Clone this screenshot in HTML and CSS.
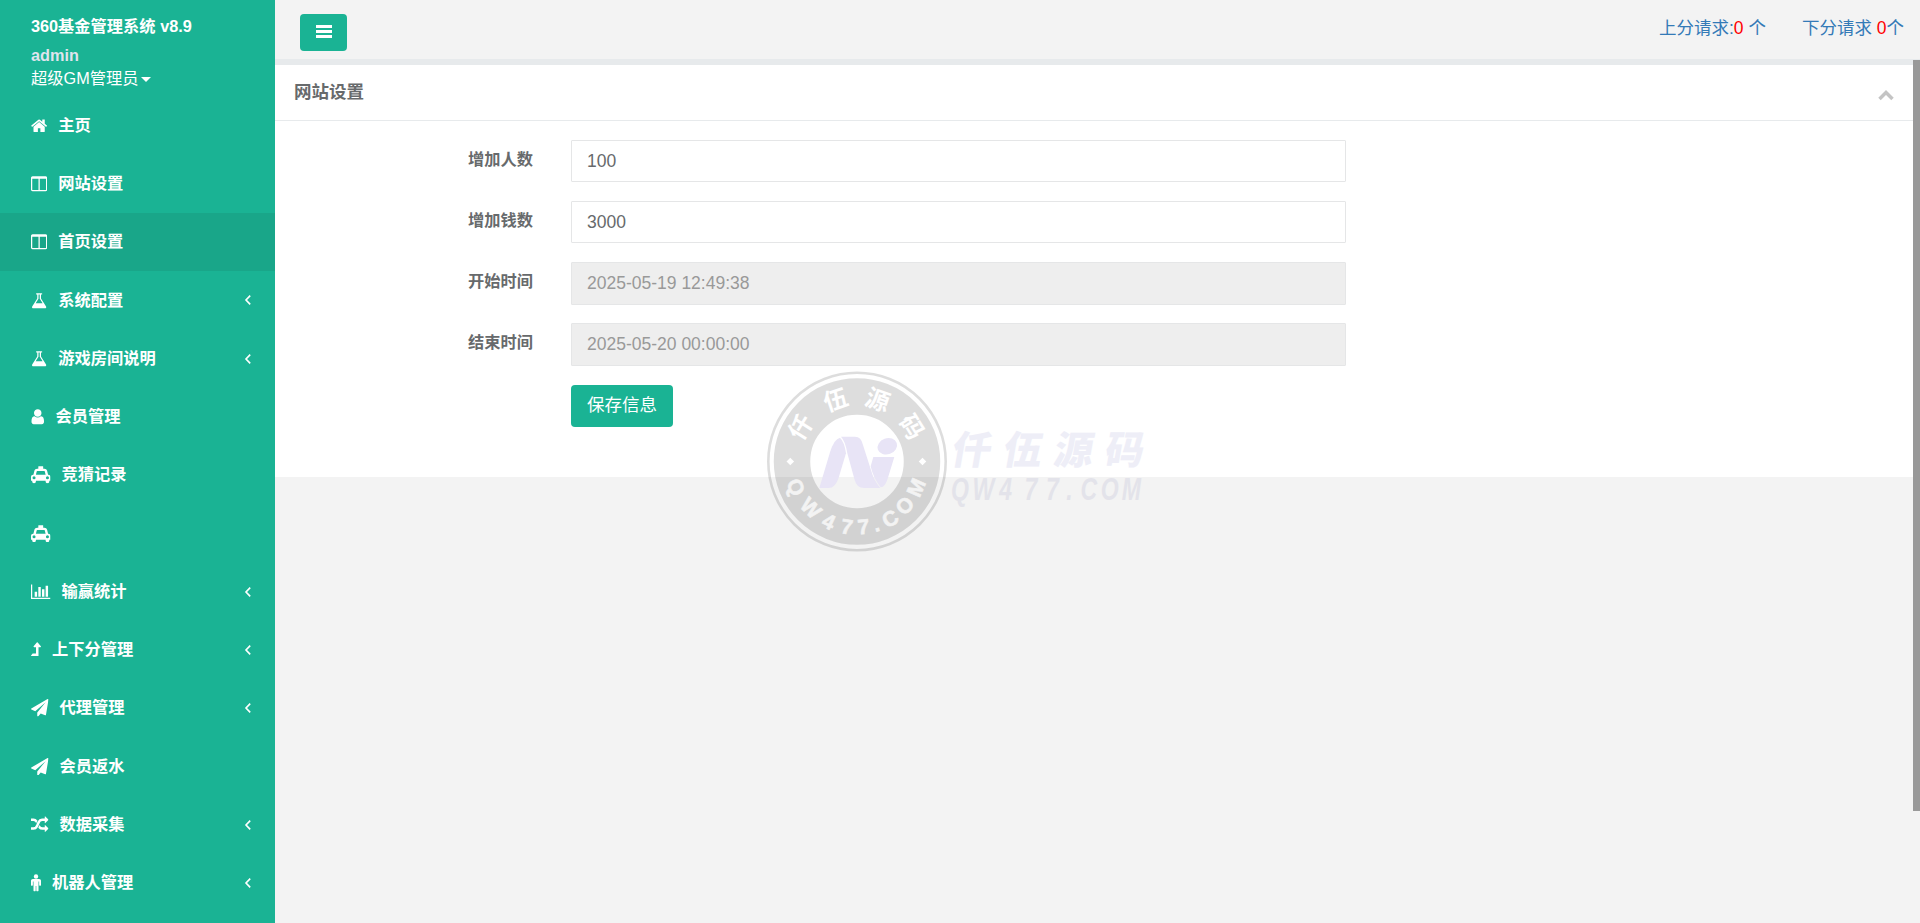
FILE: index.html
```html
<!DOCTYPE html>
<html lang="zh-CN">

<head>
    <meta charset="utf-8">
    <title>网站设置</title>
    <link rel="stylesheet" href="styles.css">
</head>

<body>
    <svg class="defs">
        <symbol id="home" viewBox="64 0 1664 1792"><path d="M1472 992v480q0 26-19 45t-45 19h-384v-384h-256v384h-384q-26 0-45-19t-19-45v-480q0-1 .5-3t.5-3l575-474 575 474q1 2 1 6zm223-69l-62 74q-8 9-21 11h-3q-13 0-21-7l-692-577-692 577q-12 8-24 7-13-2-21-11l-62-74q-8-10-7-23.5t11-21.5l719-599q32-26 76-26t76 26l244 204v-195q0-14 9-23t23-9h192q14 0 23 9t9 23v408l219 182q10 8 11 21.5t-7 23.5z"/></symbol>
        <symbol id="columns" viewBox="64 0 1664 1792"><path d="M224 1536h608v-1152h-640v1120q0 13 9.5 22.5t22.5 9.5zm1376-32v-1120h-640v1152h608q13 0 22.5-9.5t9.5-22.5zm128-1216v1216q0 66-47 113t-113 47h-1344q-66 0-113-47t-47-113v-1216q0-66 47-113t113-47h1344q66 0 113 47t47 113z"/></symbol>
        <symbol id="flask" viewBox="64 0 1664 1792"><path d="M1591 1448q56 89 21.5 152.5t-140.5 63.5h-1152q-106 0-140.5-63.5t21.5-152.5l503-793v-399h-64q-26 0-45-19t-19-45 19-45 45-19h512q26 0 45 19t19 45-19 45-45 19h-64v399zm-779-725l-272 429h712l-272-429-20-31v-436h-128v436z"/></symbol>
        <symbol id="user" viewBox="256 0 1280 1792"><path d="M1536 1399q0 109-62.5 187t-150.5 78h-854q-88 0-150.5-78t-62.5-187q0-85 8.5-160.5t31.5-152 58.5-131 94-89 134.5-34.5q131 128 313 128t313-128q76 0 134.5 34.5t94 89 58.5 131 31.5 152 8.5 160.5zm-256-887q0 159-112.5 271.5t-271.5 112.5-271.5-112.5-112.5-271.5 112.5-271.5 271.5-112.5 271.5 112.5 112.5 271.5z"/></symbol>
        <symbol id="taxi" viewBox="0 0 2048 1792"><path fill-rule="evenodd" d="M1824 896q93 0 158.500 65.500t65.500 158.500v384q0 32-32 32h-96v64q0 80-56 136t-136 56-136-56-56-136v-64h-1024v64q0 80-56 136t-136 56-136-56-56-136v-64h-96q-32 0-32-32v-384q0-93 65.500-158.500t158.500-65.500h28l105-419q23-94 104-157.500t179-63.500h128v-224q0-32 32-32h448q32 0 32 32v224h128q98 0 179 63.500t104 157.500l105 419zM320 1376a160 160 0 1 0 0-320a160 160 0 1 0 0 320zM516 896h1016l-89-357q-2-8-14-17.500t-21-9.500h-768q-9 0-21 9.500t-14 17.500zM1728 1376a160 160 0 1 0 0-320a160 160 0 1 0 0 320z"/></symbol>
        <symbol id="chart" viewBox="0 0 2048 1792"><path d="M640 896v512h-256v-512h256zm384-512v1024h-256v-1024h256zm1024 1152v128h-2048v-1536h128v1408h1920zm-640-896v768h-256v-768h256zm384-384v1152h-256v-1152h256z"/></symbol>
        <symbol id="level" viewBox="0 0 1024 1792"><path d="M1018 595q-17 37-58 37h-192v872q0 32-32 32H32q-20 0-29-18-8-19 5-35l160-192q9-11 24-11h320V632H320q-41 0-58-37-17-36 9-68l320-384q19-22 49-22t49 22l320 384q27 32 9 68z"/></symbol>
        <symbol id="plane" viewBox="0 0 1792 1792"><path d="M1764 11q33 24 27 64l-256 1536q-5 29-32 45-14 8-31 8-11 0-24-5l-453-185-242 295q-18 23-49 23-13 0-22-4-19-7-30.500-23.500t-11.500-36.500v-349l864-1059-1069 925-395-162q-37-14-40-55-2-40 32-59l1664-960q15-9 32-9 20 0 36 11z"/></symbol>
        <symbol id="random" viewBox="0 0 1792 1792"><path d="M666 481q-60 92-137 273-22-45-37-72.500t-40.500-63.500-51-56.500-63-35-81.500-14.500h-224q-14 0-23-9t-9-23v-192q0-14 9-23t23-9h224q250 0 410 225zm1126 799q0 14-9 23l-320 320q-9 9-23 9-13 0-22.500-9.500t-9.500-22.500v-192q-32 0-85 .5t-81 1-73-1-71-5-64-10.500-63-18.500-58-28.500-59-40-55-53.500-56-69.500q59-93 136-273 22 45 37 72.500t40.500 63.500 51 56.500 63 35 81.500 14.500h256v-192q0-14 9-23t23-9q12 0 24 10l319 319q9 9 9 23zm0-896q0 14-9 23l-320 320q-9 9-23 9-13 0-22.500-9.500t-9.500-22.500v-192h-256q-48 0-87 15t-69 45-51 61.500-45 77.500q-32 62-78 171-29 66-49.500 111t-54 105-64 100-74 83-90 68.500-106.500 42-128 16.500h-224q-14 0-23-9t-9-23v-192q0-14 9-23t23-9h224q48 0 87-15t69-45 51-61.500 45-77.500q32-62 78-171 29-66 49.500-111t54-105 64-100 74-83 90-68.500 106.500-42 128-16.500h256v-192q0-14 9-23t23-9q12 0 24 10l319 319q9 9 9 23z"/></symbol>
        <symbol id="male" viewBox="0 0 1024 1792"><path d="M1024 704v416q0 40-28 68t-68 28-68-28-28-68V768h-64v912q0 46-33 79t-79 33-79-33-33-79v-464h-64v464q0 46-33 79t-79 33-79-33-33-79V768h-64v352q0 40-28 68t-68 28-68-28-28-68V704q0-80 56-136t136-56h640q80 0 136 56t56 136z"/><circle cx="512" cy="256" r="224"/></symbol>
        <symbol id="left" viewBox="0 0 8 12"><path d="M6.200 1.600L2 6l4.200 4.400" fill="none" stroke="currentColor" stroke-width="1.600"/></symbol>
    </svg>

    <div class="wrapper">
        <div class="sidebar">
            <div class="profile">
                <div class="brand">360基金管理系统 v8.9</div>
                <div class="name">admin</div>
                <div class="role">超级GM管理员<b class="caret"></b></div>
            </div>
            <ul class="menu">
                <li><svg class="icon w15"><use href="#home"/></svg><span>主页</span></li>
                <li><svg class="icon w15"><use href="#columns"/></svg><span>网站设置</span></li>
                <li class="active"><svg class="icon w15"><use href="#columns"/></svg><span>首页设置</span></li>
                <li><svg class="icon w15"><use href="#flask"/></svg><span>系统配置</span><svg class="arrow"><use href="#left"/></svg></li>
                <li><svg class="icon w15"><use href="#flask"/></svg><span>游戏房间说明</span><svg class="arrow"><use href="#left"/></svg></li>
                <li><svg class="icon w13"><use href="#user"/></svg><span>会员管理</span></li>
                <li><svg class="icon w19"><use href="#taxi"/></svg><span>竞猜记录</span></li>
                <li><svg class="icon w19"><use href="#taxi"/></svg></li>
                <li><svg class="icon w19"><use href="#chart"/></svg><span>输赢统计</span><svg class="arrow"><use href="#left"/></svg></li>
                <li><svg class="icon w10"><use href="#level"/></svg><span>上下分管理</span><svg class="arrow"><use href="#left"/></svg></li>
                <li><svg class="icon w17"><use href="#plane"/></svg><span>代理管理</span><svg class="arrow"><use href="#left"/></svg></li>
                <li><svg class="icon w17"><use href="#plane"/></svg><span>会员返水</span></li>
                <li><svg class="icon w17"><use href="#random"/></svg><span>数据采集</span><svg class="arrow"><use href="#left"/></svg></li>
                <li><svg class="icon w10"><use href="#male"/></svg><span>机器人管理</span><svg class="arrow"><use href="#left"/></svg></li>
            </ul>
        </div>

        <div class="page">
            <div class="topbar">
                <button class="toggle" type="button">
                    <svg width="16" height="13" viewBox="0 0 16 13"><path d="M0 0h16v3H0zM0 5h16v3H0zM0 10h16v3H0z" fill="#fff"/></svg>
                </button>
                <div class="links">
                    <a>上分请求:<i>0</i> 个</a>
                    <a>下分请求 <i>0</i>个</a>
                </div>
            </div>

            <div class="ibox">
                <div class="ibox-title">
                    <h5>网站设置</h5>
                    <svg width="16" height="11" viewBox="0 0 16 11"><path d="M1.500 9L8 2.500 14.500 9" fill="none" stroke="#c4c4c4" stroke-width="3.500"/></svg>
                </div>
                <form class="ibox-content">
                    <div class="row"><label>增加人数</label><input type="text" value="100"></div>
                    <div class="row"><label>增加钱数</label><input type="text" value="3000"></div>
                    <div class="row"><label>开始时间</label><input type="text" value="2025-05-19 12:49:38" disabled></div>
                    <div class="row"><label>结束时间</label><input type="text" value="2025-05-20 00:00:00" disabled></div>
                    <div class="row"><label></label><button class="save" type="button">保存信息</button></div>
                </form>
            </div>
        </div>
    </div>

    <div class="scrollbar"></div>

    <!-- watermark -->
    <svg class="watermark" width="390" height="190" viewBox="762 366 390 190">
        <g fill="none" stroke="#000" stroke-opacity=".135">
            <circle cx="857" cy="461.500" r="88.700" stroke-width="2.600"/>
            <circle cx="857" cy="461.500" r="65" stroke-width="36.500"/>
        </g>
        <g class="seal-cn">
            <text transform="translate(801 427) rotate(-58)" y="8.500">仟</text>
            <text transform="translate(835.500 400) rotate(-19)" y="8.500">伍</text>
            <text transform="translate(877.500 400) rotate(19)" y="8.500">源</text>
            <text transform="translate(911.500 427) rotate(58)" y="8.500">码</text>
        </g>
        <path d="M790.300 457.700l3.800 3.800-3.800 3.800-3.800-3.800zM922.500 457.700l3.800 3.800-3.800 3.800-3.800-3.800z" fill="#fff"/>
        <g class="seal-en">
            <text transform="translate(796 487) rotate(67)" y="7.500">Q</text>
            <text transform="translate(811 508) rotate(45)" y="7.500">W</text>
            <text transform="translate(829 521.500) rotate(25)" y="7.500">4</text>
            <text transform="translate(847 526.500) rotate(9)" y="7.500">7</text>
            <text transform="translate(863.500 526.500) rotate(-5)" y="7.500">7</text>
            <text transform="translate(876 524) rotate(-16)" y="7.500">.</text>
            <text transform="translate(890 518.500) rotate(-30)" y="7.500">C</text>
            <text transform="translate(904.500 505.500) rotate(-47)" y="7.500">O</text>
            <text transform="translate(916 487.500) rotate(-66)" y="7.500">M</text>
        </g>
        <g transform="translate(760 365) scale(.3333)" fill="#e8e4f6">
            <path d="M178 369L210 262Q222 222 240 218Q254 232 258 265L236 338Q226 369 206 369Z"/>
            <path d="M243 215H285Q304 215 309 240L332 312Q342 348 361 369H312Q290 369 284 345L262 265Q256 228 243 215Z"/>
            <path d="M340 276H403L384 338Q376 366 362 367Q340 340 332 304Z"/>
            <ellipse cx="382" cy="244" rx="30" ry="24" transform="rotate(-20 382 244)"/>
        </g>
        <g class="mark">
            <text class="mark-cn" x="950" y="464" textLength="192" transform="translate(82 0) skewX(-10)">仟伍源码</text>
            <text class="mark-en" x="0 30 67 102 132 160 180 208 237" transform="translate(951 500) scale(.72 1)">QW477.COM</text>
        </g>
    </svg>
</body>

</html>
```

FILE: styles.css
```css
*{
    box-sizing: border-box;
}

body{
    margin: 0;
    height: 923px;
    overflow: hidden;
    position: relative;
    font-family: "Liberation Sans", "Noto Sans CJK SC", sans-serif;
    font-size: 16.25px;
    color: #676a6c;
    background-color: #f3f3f3;
}

.defs{
    display: none;
}

.wrapper{
    display: flex;
    height: 923px;
}

.sidebar{
    width: 275px;
    flex: none;
    background-color: #1ab394;
    color: white;
}

.profile{
    height: 96.500px;
    padding: 14px 0 0 31px;
    white-space: nowrap;
}

.brand{
    font-weight: bold;
    line-height: 24px;
}

.name{
    font-weight: bold;
    line-height: 24px;
    margin-top: 5px;
    color: #dfe4ed;
}

.role{
    display: flex;
    align-items: center;
    line-height: 22px;
}

.caret{
    margin-left: 3px;
    margin-top: 3px;
    border-top: 5px solid white;
    border-left: 5px solid transparent;
    border-right: 5px solid transparent;
}

.menu{
    list-style: none;
    margin: 0;
    padding: 0;
    font-weight: bold;
}

.menu li{
    display: flex;
    align-items: center;
    height: 58.250px;
    padding: 0 23px 0 31px;
    line-height: 24px;
}

.menu span{
    padding-bottom: 1.500px;
}

.menu .active{
    background-color: #19a689;
}

.icon{
    height: 17.500px;
    margin-right: 11px;
    fill: currentColor;
}

.w10{
    width: 10px;
}

.w13{
    width: 13.500px;
}

.w15{
    width: 16.250px;
}

.w17{
    width: 17.500px;
}

.w19{
    width: 19.500px;
}

.arrow{
    width: 8px;
    height: 12px;
    margin-left: auto;
}

.page{
    flex: 1;
}

.topbar{
    display: flex;
    justify-content: space-between;
    height: 65px;
    padding: 14px 16px 0 25px;
    border-bottom: 6px solid #e7eaec;
}

.toggle{
    display: flex;
    align-items: center;
    justify-content: center;
    width: 47px;
    height: 37px;
    padding: 0 0 2px 1px;
    border: none;
    border-radius: 4px;
    background-color: #1ab394;
}

.links{
    display: flex;
    gap: 36px;
    font-size: 17.500px;
    line-height: 28px;
    color: #337ab7;
}

.links i{
    font-style: normal;
    color: red;
}

.ibox{
    height: 412px;
    background-color: white;
}

.ibox-title{
    display: flex;
    justify-content: space-between;
    height: 56px;
    padding: 14px 26px 0 19px;
    border-bottom: 1px solid #e7eaec;
}

.ibox-title h5{
    margin: 0;
    font-size: 17.500px;
    line-height: 26px;
}

.ibox-title svg{
    margin-top: 11px;
}

.ibox-content{
    padding-top: 19px;
}

.row{
    display: flex;
    height: 61.150px;
}

.row label{
    width: 258px;
    margin-right: 38px;
    text-align: right;
    font-weight: bold;
    line-height: 39px;
}

.row input{
    width: 775px;
    height: 42.250px;
    padding: 0 15px;
    border: 1px solid #e5e6e7;
    border-radius: 1px;
    font-family: inherit;
    font-size: 17.500px;
    color: #676a6c;
    background-color: white;
}

.row input:disabled{
    color: #999;
    background-color: #eee;
}

.save{
    width: 102px;
    height: 42px;
    padding: 0 0 4px;
    border: none;
    border-radius: 4px;
    font-family: inherit;
    font-size: 17.500px;
    color: white;
    background-color: #1ab394;
}

.scrollbar{
    position: absolute;
    top: 60px;
    right: 0;
    width: 7px;
    height: 751px;
    background-color: #999;
}

.watermark{
    position: absolute;
    left: 762px;
    top: 366px;
    pointer-events: none;
}

.seal-cn{
    font-family: "Noto Sans CJK SC", sans-serif;
    font-size: 24px;
    font-weight: bold;
    text-anchor: middle;
    fill: white;
}

.seal-en{
    font-size: 21px;
    font-weight: bold;
    text-anchor: middle;
    fill: #f3f3f3;
    stroke: #f3f3f3;
    stroke-width: .6px;
}

.mark{
    font-weight: bold;
}

.mark-cn{
    font-family: "Noto Sans CJK SC", sans-serif;
    font-size: 39px;
    font-weight: 900;
    fill: #eeeef7;
}

.mark-en{
    font-size: 32px;
    font-style: italic;
    fill: #e3e3ea;
}
```
